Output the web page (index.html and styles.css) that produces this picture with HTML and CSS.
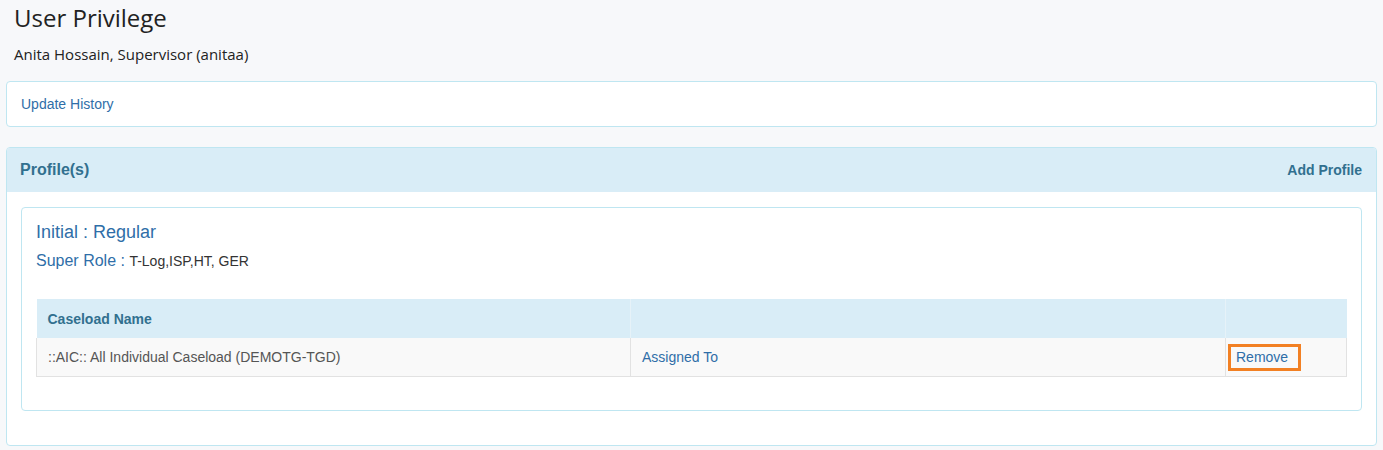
FILE: index.html
```html
<!DOCTYPE html>
<html>
<head>
<meta charset="utf-8">
<link rel="stylesheet" href="styles.css">
</head>
<body>
<div class="page">
  <h1 class="title">User Privilege</h1>
  <p class="subtitle">Anita Hossain, Supervisor (anitaa)</p>

  <div class="card history">
    <a class="link" href="#">Update History</a>
  </div>

  <div class="panel">
    <div class="panel-heading">
      <span class="panel-title">Profile(s)</span>
      <a class="panel-action" href="#">Add Profile</a>
    </div>
    <div class="panel-body">
      <div class="profile">
        <div class="profile-name">Initial : Regular</div>
        <div class="super-role"><span class="sr-label">Super Role :</span> <span class="sr-value">T-Log,ISP,HT, GER</span></div>
        <table class="caseload">
          <thead>
            <tr>
              <th class="c1">Caseload Name</th>
              <th class="c2"></th>
              <th class="c3"></th>
            </tr>
          </thead>
          <tbody>
            <tr>
              <td class="c1">::AIC:: All Individual Caseload (DEMOTG-TGD)</td>
              <td class="c2"><a class="link" href="#">Assigned To</a></td>
              <td class="c3"><a class="remove" href="#">Remove</a></td>
            </tr>
          </tbody>
        </table>
      </div>
    </div>
  </div>
</div>
</body>
</html>
```
FILE: styles.css
```css
html, body {
  margin: 0;
  padding: 0;
  background: #f7f8fa;
}
.page {
  padding: 0 6px 0 6px;
  font-family: "Liberation Sans", Arial, sans-serif;
  color: #333;
}
.title {
  margin: 0;
  padding: 2px 0 0 8px;
  font-family: "Open Sans", sans-serif;
  font-weight: 400;
  font-size: 24px;
  line-height: 32px;
  color: #222;
}
.subtitle {
  margin: 0;
  padding: 9px 0 0 8px;
  font-family: "Open Sans", sans-serif;
  font-size: 15px;
  line-height: 22px;
  color: #222;
}
.card {
  background: #fff;
  border: 1px solid #bfe6f1;
  border-radius: 4px;
}
.history {
  margin-top: 16px;
  height: 44px;
  display: flex;
  align-items: center;
  padding-left: 14px;
}
.link {
  color: #2f6ea8;
  text-decoration: none;
  font-size: 14px;
}
.panel {
  margin-top: 20px;
  background: #fff;
  border: 1px solid #bfe6f1;
  border-radius: 4px;
  height: 299px;
  box-sizing: border-box;
}
.panel-heading {
  background: #d9edf7;
  height: 44px;
  display: flex;
  align-items: center;
  justify-content: space-between;
  padding: 0 14px 0 13px;
  border-radius: 3px 3px 0 0;
}
.panel-title {
  font-weight: 700;
  font-size: 16px;
  color: #31708f;
}
.panel-action {
  font-weight: 700;
  font-size: 14px;
  color: #31708f;
  text-decoration: none;
}
.panel-body {
  padding: 15px 14px 0 14px;
}
.profile {
  border: 1px solid #bfe6f1;
  border-radius: 4px;
  padding: 12px 14px 33px 14px;
  background: #fff;
}
.profile-name {
  font-size: 18px;
  line-height: 24px;
  color: #2f6ea8;
}
.super-role {
  margin-top: 7px;
  line-height: 20px;
}
.sr-label {
  font-size: 16px;
  color: #2f6ea8;
}
.sr-value {
  font-size: 14px;
  color: #333;
}
.caseload {
  margin-top: 28px;
  width: 100%;
  border-collapse: collapse;
  table-layout: fixed;
}
.caseload th {
  background: #d9edf7;
  height: 39px;
  padding: 0 0 0 11px;
  text-align: left;
  font-size: 14px;
  font-weight: 700;
  color: #31708f;
  border-left: 1px solid #e6f2f8;
}
.caseload th:first-child {
  border-left: none;
}
.caseload td {
  background: #f9f9f9;
  height: 38px;
  padding: 0 0 0 11px;
  font-size: 14px;
  color: #555;
  border: 1px solid #e2e2e2;
  border-top: none;
}
.caseload .c1 { width: 594px; box-sizing: border-box; }
.caseload .c2 { width: 595px; box-sizing: border-box; }
.caseload td.c3 { padding-left: 2px; }
.remove {
  display: inline-block;
  border: 3px solid #f28023;
  padding: 2px 10px 2px 5px;
  color: #2f6ea8;
  text-decoration: none;
  font-size: 14px;
  line-height: 17px;
}
```
